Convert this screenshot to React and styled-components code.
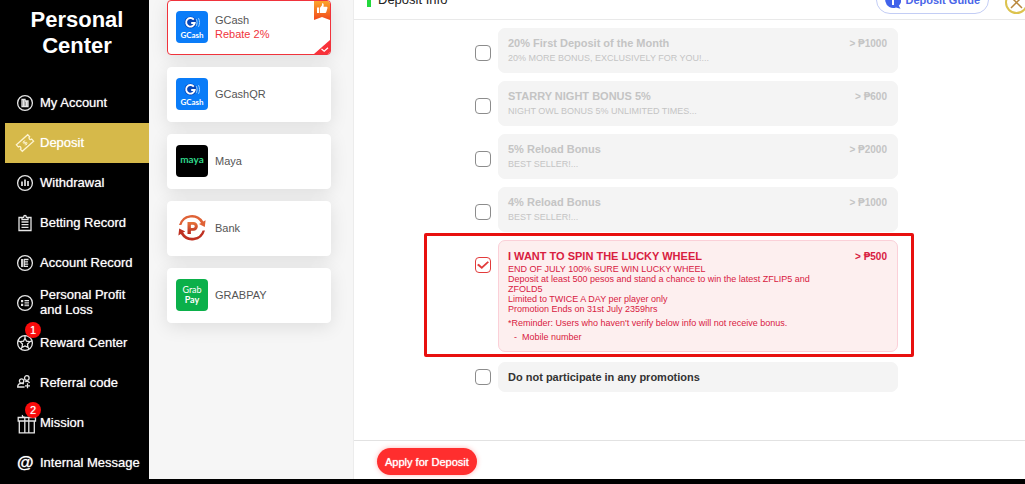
import React, { useState } from 'react'
import styled, { createGlobalStyle, css } from 'styled-components'

const GlobalStyle = createGlobalStyle`
    * {
        box-sizing: border-box;
    }

    body {
        background:  #000;
        font-family: "Liberation Sans", Arial, sans-serif;
        margin:      0;
    }

    button {
        font-family: inherit;
    }
`

const Page = styled.div`
    display:    flex;
    min-height: 100vh;
    overflow:   hidden;
`

const Sidebar = styled.aside`
    background:   #000;
    color:        #fff;
    flex:         0 0 149px;
    padding-left: 5px;
`

const SidebarTitle = styled.h1`
    font-size:   22px;
    line-height: 26px;
    margin:      0;
    padding:     7px 20px 24px;
    text-align:  center;
`

const NavLink = styled.a`
    align-items:     center;
    background:      ${props => props.$active ? '#d6b94a' : 'transparent'};
    color:           #fff;
    display:         flex;
    font-size:       13px;
    gap:             7px;
    height:          40px;
    line-height:     15px;
    padding-left:    12px;
    text-decoration: none;
    text-shadow:     0 0 1px rgba(255, 255, 255, 0.7);
`

const NavIcon = styled.span`
    display:   flex;
    flex:      0 0 16px;
    height:    16px;
    min-width: 0;
    position:  relative;

    svg {
        fill:         none;
        height:       16px;
        overflow:     visible;
        stroke:       ${props => props.$active ? '#fdf3cf' : '#e6e6e6'};
        stroke-width: 1.3;
        width:        16px;
    }
`

const NavLabel = styled.span`
    padding-bottom: 2px;
`

const AtSign = styled.span`
    font-size:   17px;
    font-weight: bold;
    line-height: 15px;
`

const Badge = styled.span`
    background:    #f90b0b;
    border-radius: 50%;
    font-size:     11px;
    height:        16px;
    left:          8px;
    line-height:   16px;
    position:      absolute;
    text-align:    center;
    top:           -13px;
    width:         16px;
`

const Content = styled.div`
    background:    #fff;
    display:       flex;
    flex:          1;
    margin-bottom: 5px;
    min-width:     0;
`

const Methods = styled.section`
    background:     #f6f6f6;
    border-right:   1px solid #ececec;
    display:        flex;
    flex:           0 0 205px;
    flex-direction: column;
    gap:            12px;
    padding:        0 22px 0 18px;
`

const MethodButton = styled.button`
    align-items:   center;
    background:    #fff;
    border:        1px solid ${props => props.$selected ? '#f0333c' : '#fff'};
    border-radius: 4px;
    box-shadow:    0 4px 18px rgba(0, 0, 0, 0.1);
    color:         #555;
    cursor:        pointer;
    display:       flex;
    font-size:     11px;
    gap:           7px;
    height:        55px;
    line-height:   14px;
    padding:       0 8px 2px;
    position:      relative;
    text-align:    left;
`

const MethodLogo = styled.svg`
    border-radius: 4px;
    height:        32px;
    width:         32px;
`

const Rebate = styled.div`
    color: #f0333c;
`

const Ribbon = styled.svg`
    height:   19px;
    position: absolute;
    right:    0;
    top:      0;
    width:    16px;
`

const Corner = styled.svg`
    bottom:   0;
    height:   14px;
    position: absolute;
    right:    0;
    width:    16px;
`

const Main = styled.main`
    display:        flex;
    flex:           1;
    flex-direction: column;
    min-width:      0;
`

const Header = styled.header`
    align-items:   flex-end;
    border-bottom: 1px solid #e9e9e9;
    display:       flex;
    gap:           16px;
    height:        20px;
    overflow:      hidden;
    padding:       0 0 5px 13px;
`

const HeaderTitle = styled.h2`
    border-left:   4px solid #22d83c;
    color:         #222;
    flex:          1;
    font-size:     13px;
    font-weight:   normal;
    line-height:   15px;
    margin:        0 0 7px;
    padding-left:  7px;
`

const GuideButton = styled.button`
    align-items:   center;
    background:    #fff;
    border:        1px solid #c3cdf5;
    border-radius: 14px;
    color:         #4a66e8;
    cursor:        pointer;
    display:       flex;
    flex:          0 0 110px;
    font-size:     11px;
    font-weight:   bold;
    gap:           4px;
    height:        28px;
    padding:       0 8px;
    white-space:   nowrap;

    svg {
        flex:   0 0 16px;
        height: 17px;
    }
`

const CloseButton = styled.button`
    background:    #fff;
    border:        2px solid #dcc34e;
    border-radius: 50%;
    cursor:        pointer;
    flex:          0 0 23px;
    height:        23px;
    margin-right:  -3px;
    padding:       0;

    svg {
        display: block;
        height:  19px;
        width:   19px;
    }
`

const PromoList = styled.ul`
    display:        flex;
    flex:           1;
    flex-direction: column;
    gap:            8px;
    list-style:     none;
    margin:         0 auto;
    max-width:      429px;
    padding:        8px 6px 24px 0;
    width:          100%;
`

const PromoRow = styled.li`
    display:  flex;
    gap:      7px;
    position: relative;

    &:last-child {
        margin-top: 2px;
    }

    ${props => props.$highlight && css`
        &::after {
            border:         3px solid #e8100f;
            border-radius:  2px;
            content:        '';
            inset:          -7px -16px -5px -51px;
            pointer-events: none;
            position:       absolute;
        }
    `}
`

const Checkbox = styled.input`
    appearance:    none;
    background:    #fff;
    border:        1px solid #8c8c8c;
    border-radius: 4px;
    cursor:        pointer;
    display:       grid;
    flex:          0 0 16px;
    height:        16px;
    margin:        ${props => props.$compact ? '7px' : '17px'} 0 0;
    place-items:   center;

    &:checked {
        border-color: #e23b3b;
    }

    &:checked::after {
        background: #e23b3b;
        clip-path:  polygon(0 50%, 14% 36%, 40% 66%, 88% 8%, 100% 20%, 40% 94%);
        content:    '';
        height:     9px;
        width:      12px;
    }
`

const PromoCard = styled.label`
    background:      ${props => props.$checked ? '#fdefef' : '#f4f4f4'};
    border:          1px solid ${props => props.$checked ? '#fbd0d8' : '#f4f4f4'};
    border-radius:   7px;
    color:           ${props => props.$checked ? '#d8203f' : props.$plain ? '#333' : '#c4c4c4'};
    cursor:          pointer;
    display:         flex;
    flex:            1;
    font-size:       9px;
    justify-content: space-between;
    line-height:     10px;
    min-height:      ${props => props.$plain ? '30px' : '45px'};
    padding:         ${props => props.$checked ? '9px' : '8px'} 10px 7px 9px;
`

const PromoTitle = styled.div`
    font-size:   11px;
    font-weight: bold;
    line-height: 13px;
`

const PromoBody = styled.div`
    max-width: 308px;
`

const PromoLines = styled.div`
    padding-top: ${props => props.$checked ? '1px' : '3px'};
`

const Reminder = styled.div`
    margin-top: 4px;
`

const ReminderList = styled.ul`
    list-style:   '-  ';
    margin:       4px 0 2px;
    padding-left: 14px;
`

const Minimum = styled.div`
    font-size:   10px;
    font-weight: bold;
    line-height: 13px;
    white-space: nowrap;
`

const Footer = styled.footer`
    border-top: 1px solid #e2e2e2;
    padding:    7px 23px 4px;
`

const ApplyButton = styled.button`
    background:    #ff2e2e;
    border:        0;
    border-radius: 14px;
    box-shadow:    0 0 5px rgba(255, 46, 46, 0.35);
    color:         #fff;
    cursor:        pointer;
    display:       block;
    font-size:     11px;
    height:        27px;
    padding:       0 8px;
    text-shadow:   0 0 1px #fff;
`

const navIcons = {
    account: (
        <svg viewBox="0 0 16 16">
            <circle cx="8" cy="8" r="7.4" />
            <path d="M5 4.5h3v7H5zM6.5 4.5v7M8 6h3v5.5H8M9.6 6v5.5" />
        </svg>
    ),
    deposit: (
        <svg viewBox="0 0 16 16">
            <g transform="rotate(-42 8 8)">
                <path d="M.4 3.6h15.2v2.8a1.6 1.6 0 0 0 0 3.2v2.8H.4V9.600a1.6 1.6 0 0 0 0-3.2z" />
                <path d="M9.7 6.600c-.6-.8-3-.8-3 .4s3 .7 3 1.900-2.500 1.200-3.200.3M8.100 5.300v5.400" strokeWidth="0.9" />
            </g>
        </svg>
    ),
    withdrawal: (
        <svg viewBox="0 0 16 16">
            <circle cx="8" cy="8" r="7.4" />
            <path d="M5 6.5V11M8 4.5V11M11 6v5" strokeWidth="1.7" />
        </svg>
    ),
    betting: (
        <svg viewBox="0 0 16 16">
            <path d="M5 2.500H2v13h12v-13h-3M5 4.500V2.300h1.600c.2-2.400 2.600-2.400 2.800 0H11v2.200zM4.500 7h7M4.500 9.700h7M4.500 12.400h7" />
        </svg>
    ),
    record: (
        <svg viewBox="0 0 16 16">
            <circle cx="8" cy="8" r="7.4" />
            <path d="M5 4v8" strokeWidth="1.8" />
            <path d="M7.200 4.500h4.300M7.200 6.800H11M7.200 9.100h4M7.200 11.400H11M7.200 4v8" />
        </svg>
    ),
    profit: (
        <svg viewBox="0 0 16 16">
            <circle cx="8" cy="8" r="7.4" />
            <path d="M4 6.200h2.200M4 9.800h2.200" strokeWidth="2.200" />
            <path d="M7.500 5.500H12M7.500 7.200H12M7.500 9H12M7.500 10.700H12" strokeWidth="1" />
        </svg>
    ),
    reward: (
        <svg viewBox="0 0 16 16">
            <circle cx="8" cy="8" r="7.4" />
            <path d="m8 3.200 1.500 3 3.400.5-2.400 2.400.5 3.300L8 10.900l-3 1.500.5-3.300-2.400-2.400 3.400-.5zM8 .6v2.600M12.900 6.700l2.200-.8M11 12.400l1.300 1.800M5 12.400l-1.300 1.800M3.100 6.700.9 5.900" />
        </svg>
    ),
    referral: (
        <svg viewBox="0 0 16 16">
            <circle cx="4.6" cy="6" r="2.2" />
            <circle cx="9.8" cy="3" r="2.3" />
            <path d="M7.500 12H.7c0-2.400 1.400-3.700 3.900-3.700 1 0 1.700.2 2.300.6M8.200 6.600c1.800-.5 3.800 0 4.300 1.300M10.500 8.300v5M8 10.800h5" />
        </svg>
    ),
    mission: (
        <svg viewBox="0 0 16 16">
            <path d="M1.200 2.500h17.300V6H1.200zM2.300 6v11.800h15V6M7.800 2.500v15.300M11.800 2.500v15.300M9.800 2.300C6.500 2.500 4.800 1.800 5.500 0M9.800 2.300c3.500.2 5.400-.5 4.600-2" />
        </svg>
    ),
    message: <AtSign>@</AtSign>,
}

const navItems = [
    { id: 'account', label: 'My Account' },
    { id: 'deposit', label: 'Deposit', active: true },
    { id: 'withdrawal', label: 'Withdrawal' },
    { id: 'betting', label: 'Betting Record' },
    { id: 'record', label: 'Account Record' },
    { id: 'profit', label: 'Personal Profit and Loss' },
    { id: 'reward', label: 'Reward Center', badge: 1 },
    { id: 'referral', label: 'Referral code' },
    { id: 'mission', label: 'Mission', badge: 2 },
    { id: 'message', label: 'Internal Message' },
]

const GCashLogo = () => (
    <MethodLogo viewBox="0 0 32 32">
        <rect width="32" height="32" fill="#0a7cf8" />
        <circle cx="14.5" cy="11.5" r="6" fill="#0646b8" />
        <path d="M17.800 8.600a4.300 4.300 0 1 0 .9 3.400h-3.500" fill="none" stroke="#fff" strokeWidth="1.9" />
        <path d="M20.300 8.200c1 2.200 1 4.400 0 6.600M22.500 7.200c1.400 2.800 1.400 5.800 0 8.600" fill="none" stroke="#9fd0ff" />
        <text x="16" y="27" fill="#fff" fontFamily="Lato, sans-serif" fontSize="8" fontWeight="bold" textAnchor="middle">GCash</text>
    </MethodLogo>
)

const MayaLogo = () => (
    <MethodLogo viewBox="0 0 32 32">
        <rect width="32" height="32" fill="#000" />
        <text x="16" y="18" fill="#2fd88a" fontFamily="Lato, sans-serif" fontSize="10" fontWeight="bold" textAnchor="middle">maya</text>
    </MethodLogo>
)

const BankLogo = () => (
    <MethodLogo viewBox="0 0 32 32">
        <defs>
            <linearGradient id="bank" x1="0" y1="0" x2="0" y2="1">
                <stop offset="0" stopColor="#e8763c" />
                <stop offset="1" stopColor="#b92a20" />
            </linearGradient>
        </defs>
        <path d="M3 13a13.300 13.300 0 0 1 24.300-3.500l2.300-1.300-.8 6.800-5.800-2.900 2-1.200A10.800 10.800 0 0 0 5.400 13z" fill="#df6236" />
        <path d="M29 18.500A13.300 13.300 0 0 1 4.800 22l-2.400 1.400.8-7 6 3-2.100 1.200A10.800 10.800 0 0 0 26.600 18.500z" fill="#bf3122" />
        <path d="M11.500 10h6a4.300 4.300 0 0 1 0 8.700h-2.600V22h-3.400zm3.400 2.800V16h2.200c2.200 0 2.200-3.200 0-3.200z" fill="url(#bank)" />
    </MethodLogo>
)

const GrabPayLogo = () => (
    <MethodLogo viewBox="0 0 32 32">
        <rect width="32" height="32" fill="#0bb04a" />
        <text fill="#fff" fontFamily="Lato, sans-serif" fontSize="9" textAnchor="middle">
            <tspan x="16" y="14">Grab</tspan>
            <tspan x="16" y="24" fontWeight="bold">Pay</tspan>
        </text>
    </MethodLogo>
)

const methods = [
    { name: 'GCash', rebate: 'Rebate 2%', recommended: true, Logo: GCashLogo },
    { name: 'GCashQR', Logo: GCashLogo },
    { name: 'Maya', Logo: MayaLogo },
    { name: 'Bank', Logo: BankLogo },
    { name: 'GRABPAY', Logo: GrabPayLogo },
]

const promos = [
    { id: 'first', title: '20% First Deposit of the Month', lines: ['20% MORE BONUS, EXCLUSIVELY FOR YOU!...'], min: 1000 },
    { id: 'night', title: 'STARRY NIGHT BONUS 5%', lines: ['NIGHT OWL BONUS 5% UNLIMITED TIMES...'], min: 600 },
    { id: 'reload5', title: '5% Reload Bonus', lines: ['BEST SELLER!...'], min: 2000 },
    { id: 'reload4', title: '4% Reload Bonus', lines: ['BEST SELLER!...'], min: 1000 },
    {
        id: 'wheel',
        title: 'I WANT TO SPIN THE LUCKY WHEEL',
        lines: [
            'END OF JULY 100% SURE WIN LUCKY WHEEL',
            'Deposit at least 500 pesos and stand a chance to win the latest ZFLIP5 and ZFOLD5',
            'Limited to TWICE A DAY per player only',
            'Promotion Ends on 31st July 2359hrs',
        ],
        reminder: "*Reminder: Users who haven't verify below info will not receive bonus.",
        missing: ['Mobile number'],
        min: 500,
        highlight: true,
    },
    { id: 'none', title: 'Do not participate in any promotions', plain: true },
]

const Method = ({ method, selected, select }) => (
    <MethodButton type="button" $selected={selected} aria-pressed={selected} onClick={select}>
        <method.Logo />
        <div>
            {method.name}
            {method.rebate && <Rebate>{method.rebate}</Rebate>}
        </div>
        {
            method.recommended &&
            <Ribbon viewBox="0 0 16 19">
                <defs>
                    <linearGradient id="ribbon" x1="0" y1="0" x2="0" y2="1">
                        <stop offset="0" stopColor="#fba52c" />
                        <stop offset="1" stopColor="#f2481c" />
                    </linearGradient>
                </defs>
                <path d="M0 0h14l2 2v17l-8-3-8 3z" fill="url(#ribbon)" />
                <path d="M3 6.500h2.200v5.500H3zM6 6.700 8 4.200V2.400c1.700-.3 2 1.200 1.500 3.300h3.200c.8 0 .9.900.7 1.600l-1.200 4c-.2.600-.6.700-1.200.7H6z" fill="#fff" />
            </Ribbon>
        }
        {
            selected &&
            <Corner viewBox="0 0 16 14">
                <path d="M16 0v12l-2 2H0z" fill="#f8323a" />
                <path d="m7.500 9 2.700 2.300L14 7.700" fill="none" stroke="#fff" strokeWidth="1.2" />
            </Corner>
        }
    </MethodButton>
)

const Promo = ({ promo, checked, toggle }) => (
    <PromoRow $highlight={promo.highlight}>
        <Checkbox
            type="checkbox"
            id={promo.id}
            checked={checked}
            onChange={toggle}
            $compact={promo.plain}
        />
        <PromoCard htmlFor={promo.id} $checked={checked} $plain={promo.plain}>
            <PromoBody>
                <PromoTitle>{promo.title}</PromoTitle>
                {
                    promo.lines &&
                    <PromoLines $checked={checked}>
                        {promo.lines.map(line => <div key={line}>{line}</div>)}
                    </PromoLines>
                }
                {
                    promo.reminder &&
                    <>
                        <Reminder>{promo.reminder}</Reminder>
                        <ReminderList>
                            {promo.missing.map(field => <li key={field}>{field}</li>)}
                        </ReminderList>
                    </>
                }
            </PromoBody>
            {promo.min && <Minimum>&gt; ₱{promo.min}</Minimum>}
        </PromoCard>
    </PromoRow>
)

const App = () => {
    const [method, setMethod] = useState('GCash')
    const [promo, setPromo] = useState('wheel')

    return (
        <>
            <GlobalStyle />
            <Page>
                <Sidebar>
                    <SidebarTitle>Personal Center</SidebarTitle>
                    <nav>
                        {navItems.map(item => (
                            <NavLink key={item.id} href={`#${item.id}`} $active={item.active}>
                                <NavIcon $active={item.active}>
                                    {navIcons[item.id]}
                                    {item.badge && <Badge>{item.badge}</Badge>}
                                </NavIcon>
                                <NavLabel>{item.label}</NavLabel>
                            </NavLink>
                        ))}
                    </nav>
                </Sidebar>
                <Content>
                    <Methods>
                        {methods.map(item => (
                            <Method
                                key={item.name}
                                method={item}
                                selected={item.name === method}
                                select={() => setMethod(item.name)}
                            />
                        ))}
                    </Methods>
                    <Main>
                        <Header>
                            <HeaderTitle>Deposit Info</HeaderTitle>
                            <GuideButton type="button">
                                <svg viewBox="0 0 16 17">
                                    <path d="M8 0a8 8 0 1 0 3 15.500l4.500 1.200-1.700-3A8 8 0 0 0 8 0z" fill="#4163ea" />
                                    <path d="M8 7.500V13M8 4v2" stroke="#fff" strokeWidth="2" />
                                </svg>
                                Deposit Guide
                            </GuideButton>
                            <CloseButton type="button" aria-label="Close">
                                <svg viewBox="0 0 19 19">
                                    <path d="m4 4 11 11M15 4 4 15" stroke="#b8863b" strokeWidth="1.5" />
                                </svg>
                            </CloseButton>
                        </Header>
                        <PromoList>
                            {promos.map(item => (
                                <Promo
                                    key={item.id}
                                    promo={item}
                                    checked={item.id === promo}
                                    toggle={() => setPromo(item.id)}
                                />
                            ))}
                        </PromoList>
                        <Footer>
                            <ApplyButton type="button">Apply for Deposit</ApplyButton>
                        </Footer>
                    </Main>
                </Content>
            </Page>
        </>
    )
}

export default App
